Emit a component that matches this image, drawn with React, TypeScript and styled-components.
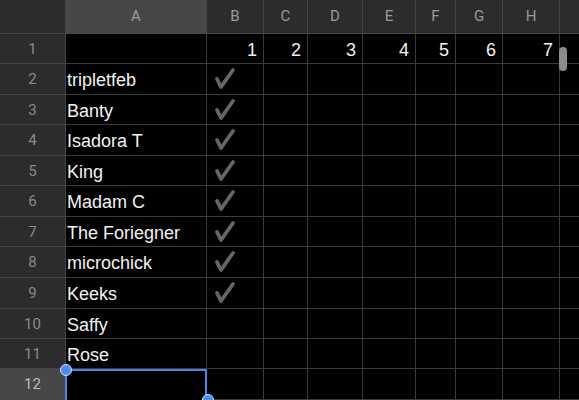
import React from "react";
import styled, { createGlobalStyle } from "styled-components";

const Global = createGlobalStyle`
  html, body { margin: 0; padding: 0; background: #000; overflow: hidden; }
  #root { width: 579px; height: 400px; overflow: hidden; }
`;

const COLS = [66, 141, 57, 44, 55, 53, 40, 47, 57, 40];
const ROWS = [34, 30, 31, 30, 31, 30, 31, 30, 31, 31, 30, 30, 31];
const LETTERS = ["A", "B", "C", "D", "E", "F", "G", "H", ""];
const NAMES = [
  "",
  "tripletfeb",
  "Banty",
  "Isadora T",
  "King",
  "Madam C",
  "The Foriegner",
  "microchick",
  "Keeks",
  "Saffy",
  "Rose",
  "",
];

const Sheet = styled.div`
  position: relative;
  width: 579px;
  height: 400px;
  overflow: hidden;
  display: grid;
  grid-template-columns: ${COLS.map((c) => c + "px").join(" ")};
  grid-template-rows: ${ROWS.map((r) => r + "px").join(" ")};
  font-family: Roboto, "Liberation Sans", sans-serif;
  background: #000;
`;

const Cell = styled.div<{ $align?: "left" | "right" }>`
  box-sizing: border-box;
  border-right: 1px solid #3a3a3a;
  border-bottom: 1px solid #3a3a3a;
  background: #000;
  color: #f2f2f2;
  font-family: "Liberation Sans", Arial, sans-serif;
  font-size: 18px;
  display: flex;
  align-items: center;
  justify-content: ${(p) => (p.$align === "right" ? "flex-end" : "flex-start")};
  padding: ${(p) => (p.$align === "right" ? "3px 6px 0 0" : "3px 0 0 1px")};
  white-space: nowrap;
  overflow: visible;
`;

const Corner = styled.div`
  box-sizing: border-box;
  background: #2c2c2c;
  border-right: 1px solid #444;
  border-bottom: 1px solid #444;
`;

const ColHead = styled.div<{ $active?: boolean }>`
  box-sizing: border-box;
  background: ${(p) => (p.$active ? "#474747" : "#2c2c2c")};
  border-right: 1px solid #444;
  border-bottom: 1px solid #4a4a4a;
  color: #9a9a9a;
  font-size: 15px;
  display: flex;
  align-items: center;
  justify-content: center;
  padding-bottom: 2px;
`;

const RowHead = styled.div<{ $active?: boolean }>`
  box-sizing: border-box;
  background: ${(p) => (p.$active ? "#474747" : "#2c2c2c")};
  border-right: 1px solid #444;
  border-bottom: 1px solid #444;
  color: ${(p) => (p.$active ? "#bdbdbd" : "#8a8a8a")};
  font-size: 15px;
  display: flex;
  align-items: center;
  justify-content: center;
`;

const CheckCell = styled(Cell)`
  padding: 0 0 0 7px;
`;

const Selected = styled(Cell)`
  border: 2px solid #4a86e8;
  border-bottom: none;
  margin-left: -1px;
`;

const Handle = styled.div<{ $x: number; $y: number }>`
  position: absolute;
  left: ${(p) => p.$x - 6}px;
  top: ${(p) => p.$y - 6}px;
  width: 12px;
  height: 12px;
  border-radius: 50%;
  background: #4f8cf0;
  border: 1px solid #dbe6fb;
  box-sizing: border-box;
`;

const Scroll = styled.div`
  position: absolute;
  left: 559px;
  top: 47px;
  width: 8px;
  height: 24px;
  border-radius: 4px;
  background: #8c8c8c;
`;

const Check = () => (
  <svg width="22" height="24" viewBox="0 0 22 24">
    <path
      d="M3 12 L7 20 L19 3"
      fill="none"
      stroke="#666"
      strokeWidth="3.8"
      strokeLinecap="round"
      strokeLinejoin="round"
    />
  </svg>
);

export default function App() {
  const cells: React.ReactNode[] = [];
  cells.push(<Corner key="corner" />);
  LETTERS.forEach((l, i) =>
    cells.push(
      <ColHead key={"h" + i} $active={l === "A"}>
        {l}
      </ColHead>
    )
  );
  for (let r = 1; r <= 12; r++) {
    cells.push(
      <RowHead key={"r" + r} $active={r === 12}>
        {r}
      </RowHead>
    );
    for (let c = 0; c < 9; c++) {
      const key = `c${r}-${c}`;
      if (c === 0) {
        if (r === 12) cells.push(<Selected key={key} />);
        else cells.push(<Cell key={key}>{NAMES[r - 1]}</Cell>);
      } else if (r === 1 && c <= 7) {
        cells.push(
          <Cell key={key} $align="right">
            {c}
          </Cell>
        );
      } else if (c === 1 && r >= 2 && r <= 9) {
        cells.push(
          <CheckCell key={key}>
            <Check />
          </CheckCell>
        );
      } else {
        cells.push(<Cell key={key} />);
      }
    }
  }
  return (
    <>
      <Global />
      <Sheet>
        {cells}
        <Scroll />
        <Handle $x={66} $y={370} />
        <Handle $x={208} $y={400} />
      </Sheet>
    </>
  );
}
